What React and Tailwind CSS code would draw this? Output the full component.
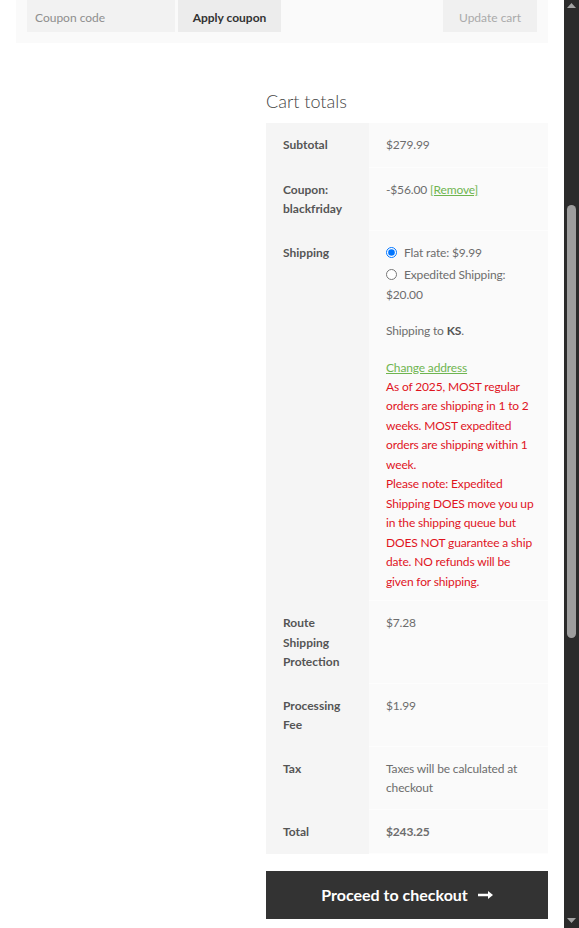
import React from "react";

const font = { fontFamily: "Lato, 'Noto Sans', sans-serif" };

function Row({ label, children, pb = "pb-3" }) {
  return (
    <div className="flex">
      <div className={`w-[103px] shrink-0 bg-[#f5f5f5] pl-[17px] pr-2 pt-3 ${pb} text-[12px] leading-[19.5px] font-bold text-[#555]`}>
        {label}
      </div>
      <div className={`flex-1 min-w-0 bg-[#fafafa] pl-[17px] pr-2 pt-3 ${pb} text-[12px] tracking-[-0.15px] leading-[19.5px] text-[#6d6d6d] border-b border-[#fdfdfd]`}>
        {children}
      </div>
    </div>
  );
}

export default function App() {
  return (
    <div className="flex w-[579px] h-[928px] overflow-hidden bg-white" style={font}>
      <div className="flex-1 flex flex-col">
        <div className="mx-[16px] h-[43px] bg-[#fafafa] flex items-start pl-[11px] pr-[11px]">
          <div className="w-[148px] h-[32px] bg-[#f2f2f2] flex items-center pl-[8px] pt-[3px] text-[12px] text-[#8e8e8e]">
            Coupon code
          </div>
          <div className="ml-[3px] w-[103px] h-[32px] bg-[#ececec] flex items-center justify-center pt-[3px] text-[12px] font-bold text-[#333]">
            Apply coupon
          </div>
          <div className="ml-auto w-[94px] h-[32px] bg-[#f0f0f0] flex items-center justify-center pt-[3px] text-[12px] text-[#aaa]">
            Update cart
          </div>
        </div>

        <div className="ml-[266px] w-[282px] mt-[46px]">
          <h2 className="text-[18px] leading-[24px] font-light text-[#444]">Cart totals</h2>
          <div className="mt-[10px]">
            <Row label="Subtotal">$279.99</Row>
            <Row label={<>Coupon:<br />blackfriday</>}>
              -$56.00{" "}
              <span className="text-[#6fb550] underline">[Remove]</span>
            </Row>
            <Row label="Shipping" pb="pb-[9px]">
              <div className="leading-[20px]">
                <div className="mb-[2px] flex items-center">
                  <input type="radio" checked readOnly className="w-[11px] h-[11px] mr-[7px] m-0" />
                  <span>Flat rate: $9.99</span>
                </div>
                <div>
                  <input type="radio" readOnly className="w-[11px] h-[11px] mr-[7px] m-0 align-[-1px]" />
                  Expedited Shipping:
                  <br />
                  $20.00
                </div>
              </div>
              <p className="mt-[16px] leading-[20px]">
                Shipping to <strong className="text-[#555]">KS</strong>.
              </p>
              <p className="mt-[17px] leading-[19px]">
                <span className="text-[#6fb550] underline">Change address</span>
              </p>
              <div className="text-[#e0141e] whitespace-nowrap">
                As of 2025, MOST regular<br />
                orders are shipping in 1 to 2<br />
                weeks. MOST expedited<br />
                orders are shipping within 1<br />
                week.<br />
                Please note: Expedited<br />
                Shipping DOES move you up<br />
                in the shipping queue but<br />
                DOES NOT guarantee a ship<br />
                date. NO refunds will be<br />
                given for shipping.
              </div>
            </Row>
            <Row label={<>Route<br />Shipping<br />Protection</>}>$7.28</Row>
            <Row label={<>Processing<br />Fee</>}>$1.99</Row>
            <Row label="Tax" pb="pb-[11px]">
              Taxes will be calculated at<br />checkout
            </Row>
            <Row label="Total">
              <strong className="text-[#6d6d6d]">$243.25</strong>
            </Row>
          </div>
          <div className="mt-[17px] h-[48px] bg-[#333333] flex items-center justify-center gap-[10px] text-white text-[16px] font-bold">
            <span>Proceed to checkout</span>
            <svg width="15" height="10" viewBox="0 0 15 10" fill="white">
              <path d="M0 3.8h10V1l5 4-5 4V6.2H0z" />
            </svg>
          </div>
        </div>
      </div>

      <div className="w-[15px] h-full bg-[#2b2b2b] flex flex-col items-center">
        <svg width="9" height="6" viewBox="0 0 9 6" className="mt-[3px]">
          <path d="M0 5h9L4.5 0z" fill="#a3a3a3" />
        </svg>
        <div className="mt-[196px] w-[9px] h-[433px] rounded-full bg-[#9e9e9e]" />
        <div className="flex-1" />
        <svg width="9" height="6" viewBox="0 0 9 6" className="mb-[4px]">
          <path d="M0 0h9L4.5 5z" fill="#a3a3a3" />
        </svg>
      </div>
    </div>
  );
}
